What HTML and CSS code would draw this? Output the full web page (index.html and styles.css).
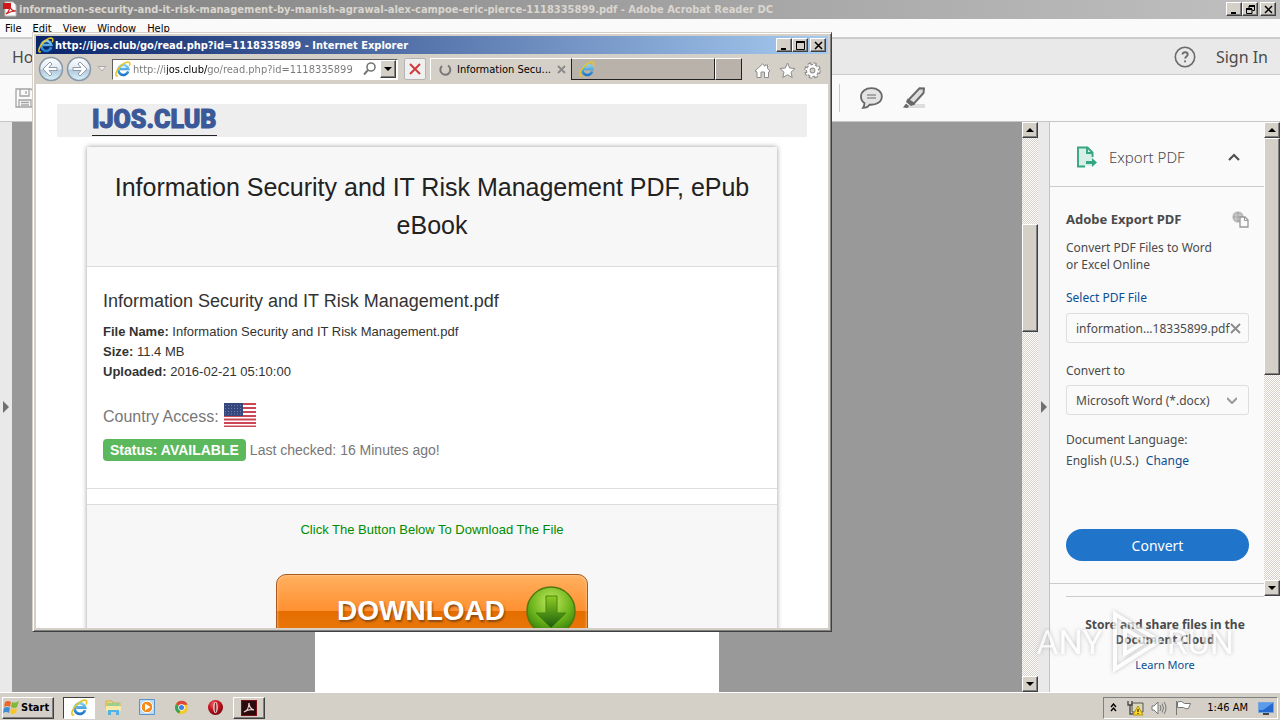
FILE: index.html
```html
<!DOCTYPE html>
<html lang="en">
<head>
  <meta charset="utf-8">
  <title>Desktop</title>
  <link rel="stylesheet" href="styles.css">
</head>
<body class="desktop">
  <svg class="sprites" width="0" height="0">
    <defs>
      <linearGradient id="ieBlue" x1="0" y1="0" x2="0" y2="1">
        <stop offset="0" stop-color="#7fd0f5"/>
        <stop offset="1" stop-color="#1b78c8"/>
      </linearGradient>
      <linearGradient id="navFill" x1="0" y1="0" x2="0" y2="1">
        <stop offset="0" stop-color="#fff"/>
        <stop offset="0.5" stop-color="#dfe8f0"/>
        <stop offset="0.55" stop-color="#b4c8dc"/>
        <stop offset="1" stop-color="#d8f4fc"/>
      </linearGradient>
      <radialGradient id="greenBall" cx="0.5" cy="0.3" r="0.7">
        <stop offset="0" stop-color="#c3e85e"/>
        <stop offset="0.6" stop-color="#6cb51c"/>
        <stop offset="1" stop-color="#357d08"/>
      </radialGradient>
      <linearGradient id="greenArrow" x1="0" y1="0" x2="0" y2="1">
        <stop offset="0" stop-color="#8fcc22"/>
        <stop offset="1" stop-color="#175c0c"/>
      </linearGradient>
      <radialGradient id="operaRed" cx="0.4" cy="0.3" r="0.7">
        <stop offset="0" stop-color="#f26a6a"/>
        <stop offset="0.5" stop-color="#c81420"/>
        <stop offset="1" stop-color="#7c0410"/>
      </radialGradient>
    </defs>
    <symbol id="ie" viewBox="0 0 16 16">
      <path d="M13.2 10.4A5 5 0 1 1 13.3 8H5" fill="none" stroke="url(#ieBlue)" stroke-width="2.6"/>
      <path d="M3 14.6C0 16 .2 12.4 2.6 8.6 5.6 4 11 .4 13.8 1.2c1.400.5 1.300 2.300.4 4" fill="none" stroke="#e8c520" stroke-width="1.5"/>
    </symbol>
  </svg>

  <main class="acrobat">
    <header class="acrobat-title">
      <svg width="16" height="16" viewBox="0 0 16 16"><path d="M3 1h8l3 3v11H3z" fill="#fff" stroke="#bbb"/><path d="M1 2h8v6H1z" fill="#d01818"/><path d="M4 13c4-3 4-6 4-9 0 4 2 6 6 6-4 0-7 1-10 3z" fill="none" stroke="#c22" stroke-width="1.2"/></svg>
      <span class="grow">information-security-and-it-risk-management-by-manish-agrawal-alex-campoe-eric-pierce-1118335899.pdf - Adobe Acrobat Reader DC</span>
      <div class="window-buttons">
        <button aria-label="Minimize"><svg width="9" height="9"><path d="M1 7h5v2H1z"/></svg></button>
        <button aria-label="Restore"><svg width="9" height="9"><path d="M3 3V1h5.500v4.500H6.500M.5 4h5.500v4.500H.5z" fill="none" stroke="#000"/><path d="M3 0h6v2H3zM0 3h6v2H0z"/></svg></button>
        <button class="spaced" aria-label="Close"><svg width="9" height="9"><path d="M1 1l7 7M8 1L1 8" stroke="#000" stroke-width="1.500"/></svg></button>
      </div>
    </header>
    <nav class="menu-bar">
      <button>File</button><button>Edit</button><button>View</button><button>Window</button><button>Help</button>
    </nav>
    <div class="home-bar">
      <button class="home-tab">Home</button>
      <span class="grow"></span>
      <button class="icon-button" aria-label="Help"><svg width="22" height="22" viewBox="0 0 22 22" fill="none" stroke="#6b6b6b" stroke-width="1.600"><circle cx="11" cy="11" r="9.700"/><path d="M8.500 8.600c0-3.200 5.200-3 5.200 0 0 1.900-2.600 1.800-2.600 4M11.100 14.500v1.800" stroke-width="1.900"/></svg></button>
      <button class="sign-in">Sign In</button>
    </div>
    <div class="tool-bar">
      <button class="icon-button" aria-label="Save"><svg width="20" height="20" viewBox="0 0 20 20" fill="none" stroke="#a4a4a4" stroke-width="1.300"><path d="M1 1h15l3 3v15H1zM5 1v7h9V1M4 19v-7h12v7M11 3v3M6 14.500h8M6 17h8"/></svg></button>
      <span class="grow"></span>
      <i class="divider"></i>
      <button class="icon-button" aria-label="Comment"><svg width="24" height="22" viewBox="0 0 24 22"><path d="M12.500 1.200C6.500 1.200 2 4.600 2 9.400c0 3 1.500 5.300 3.500 6.600 0 2-.5 3.500-1.500 4.800 3 0 5.500-1.500 6.500-3.100 7 .6 12.300-3 12.300-8.300 0-4.800-4.500-8.200-10.300-8.200z" fill="#e4e4e4" stroke="#686868" stroke-width="1.800"/><path d="M8 8h9M8 11h9" stroke="#686868"/></svg></button>
      <button class="icon-button" aria-label="Highlight"><svg width="24" height="22" viewBox="0 0 24 22"><path d="M7 17h16v4H5z" fill="#ddd"/><path d="M6.500 13L17.500 1.300 22 1.500l-.5 4.500L12 16.500z" fill="#ddd" stroke="#686868" stroke-width="1.900"/><path d="M5.500 11.500l7.500 6-4 1.500-5-4zM1 20.500l3-4 3 2.500-1.500 2z" fill="#686868"/></svg></button>
    </div>

    <div class="workspace">
      <button class="side-strip" aria-label="Open left pane"><svg width="6" height="12"><path d="M0 0l6 6-6 6z" fill="#707070"/></svg></button>
      <section class="document"><div class="sheet"></div></section>
      <div class="scrollbar">
        <button aria-label="Up"><svg width="8" height="4"><path d="M0 4l4-4 4 4z"/></svg></button>
        <div class="track"><div class="thumb document-thumb"></div></div>
        <button aria-label="Down"><svg width="8" height="4"><path d="M0 0l4 4 4-4z"/></svg></button>
      </div>
      <button class="side-strip side-strip-right" aria-label="Close right pane"><svg width="6" height="12"><path d="M0 0l6 6-6 6z" fill="#707070"/></svg></button>
      <aside class="panel">
        <div class="panel-scroll">
          <div class="panel-body">
            <div class="panel-head">
              <svg width="22" height="22" viewBox="0 0 22 22"><path d="M2 1.500h9.500l5 5V20H2z" fill="#d8efe6"/><path d="M9 20.500H2V1.500h9.500l5 5V11M11 2v5h5.500" fill="none" stroke="#36a583" stroke-width="1.900"/><path d="M10 15h6v-3l5 4.500-5 4.500v-3h-6z" fill="#36a583"/></svg>
              <h2>Export PDF</h2>
              <svg width="12" height="8" fill="none" stroke="#505050" stroke-width="2.200"><path d="M1 7l5-5 5 5"/></svg>
            </div>
            <form class="export-form">
              <div class="export-title">
                <h3>Adobe Export PDF</h3>
                <svg width="17" height="17" viewBox="0 0 17 17"><circle cx="6" cy="6" r="5.500" fill="#aaa"/><path d="M0 4h12M0 8h12M4 0v12M8 0v12" stroke="#ddd" stroke-width=".7"/><path d="M8 6h5l3 3v7H8z" fill="#fafafa" stroke="#999" stroke-width="1.300"/><path d="M12.500 6v3.500H16" fill="none" stroke="#999"/></svg>
              </div>
              <p>Convert PDF Files to Word<br>or Excel Online</p>
              <label class="file-label" for="pdf-file">Select PDF File</label>
              <div class="file-field">
                <input id="pdf-file" type="text" value="information...18335899.pdf" readonly>
                <button type="button" aria-label="Remove"><svg width="11" height="11" stroke="#8a8a8a" stroke-width="1.800"><path d="M1 1l9 9M10 1l-9 9"/></svg></button>
              </div>
              <label class="convert-label" for="format">Convert to</label>
              <div class="select-field">
                <select id="format"><option>Microsoft Word (*.docx)</option></select>
                <svg width="10" height="7" fill="none" stroke="#999" stroke-width="2"><path d="M0 1l5 5 5-5"/></svg>
              </div>
              <p class="language">Document Language:<br>English (U.S.) <a href="#">Change</a></p>
              <button type="button" class="convert">Convert</button>
            </form>
          </div>
          <div class="scrollbar">
            <button aria-label="Up"><svg width="8" height="4"><path d="M0 4l4-4 4 4z"/></svg></button>
            <div class="track"><div class="thumb panel-thumb"></div></div>
            <button aria-label="Down"><svg width="8" height="4"><path d="M0 0l4 4 4-4z"/></svg></button>
          </div>
        </div>
        <footer class="panel-foot">
          <strong>Store and share files in the<br>Document Cloud</strong>
          <a href="#">Learn More</a>
        </footer>
      </aside>
    </div>
  </main>

  <section class="browser">
    <header class="browser-title">
      <svg width="16" height="16"><use href="#ie"/></svg>
      <span class="grow">http://ijos.club/go/read.php?id=1118335899 - Internet Explorer</span>
      <div class="window-buttons">
        <button aria-label="Minimize"><svg width="9" height="9"><path d="M1 7h5v2H1z"/></svg></button>
        <button aria-label="Maximize"><svg width="9" height="9"><path d="M.5 1h8v7.500h-8z" fill="none" stroke="#000"/><path d="M0 0h9v2H0z"/></svg></button>
        <button class="spaced" aria-label="Close"><svg width="9" height="9"><path d="M1 1l7 7M8 1L1 8" stroke="#000" stroke-width="1.500"/></svg></button>
      </div>
    </header>
    <nav class="browser-bar">
      <button class="nav-button" aria-label="Back"><svg width="26" height="26" viewBox="0 0 26 26"><circle cx="13" cy="13" r="11.500" fill="url(#navFill)" stroke="#8797a8" stroke-width="1.500"/><path d="M5 13l7-7 2 2-3 3.500h8v3h-8l3 3.500-2 2z" fill="#fff" stroke="#8d9bab"/></svg></button>
      <button class="nav-button" aria-label="Forward"><svg width="26" height="26" viewBox="0 0 26 26"><circle cx="13" cy="13" r="11.500" fill="url(#navFill)" stroke="#8797a8" stroke-width="1.500"/><path d="M21 13l-7-7-2 2 3 3.500H7v3h8L12 18l2 2z" fill="#fff" stroke="#8d9bab"/></svg></button>
      <button class="history" aria-label="Recent pages"><svg width="10" height="6"><path d="M1 .5h8l-4 4.500z" fill="#eee" stroke="#aaa"/></svg></button>
      <div class="address">
        <svg width="16" height="16"><use href="#ie"/></svg>
        <input type="text" aria-label="Address" value="http://ijos.club/go/read.php?id=1118335899">
        <svg width="16" height="14" fill="none" stroke="#777"><circle cx="9" cy="5" r="4" stroke-width="1.600"/><path d="M6 8l-4 4.500" stroke-width="2"/></svg>
        <button class="address-drop" aria-label="Show list"><svg width="8" height="4"><path d="M0 0l4 4 4-4z"/></svg></button>
      </div>
      <button class="stop" aria-label="Stop"><svg width="12" height="12" stroke="#d13b3b" stroke-width="2"><path d="M1 1l10 10M11 1L1 11"/></svg></button>
      <div class="tab tab-active">
        <svg width="14" height="14" fill="none" stroke="#777" stroke-width="2"><path d="M10 2.500A5 5 0 1 1 4 3"/></svg>
        <span class="grow">Information Secu...</span>
        <button aria-label="Close tab"><svg width="9" height="9" stroke="#8a8a8a" stroke-width="1.800"><path d="M1 1l7 7M8 1L1 8"/></svg></button>
      </div>
      <div class="tab tab-idle"><svg width="16" height="16"><use href="#ie"/></svg></div>
      <button class="tab-new" aria-label="New tab"></button>
      <div class="browser-tools">
        <button aria-label="Home"><svg width="17" height="17" viewBox="0 0 17 17"><path d="M1 9l7.500-7L11 4.300V3h2.500v3.500L16 9l-1.500 1v5.500h-4V10h-3.500v5.500H3V10z" fill="#fff" stroke="#8b8b8b"/></svg></button>
        <button aria-label="Favorites"><svg width="17" height="17" viewBox="0 0 17 17"><path d="M8.500 1l2.200 5 5.300.5-4 3.700 1.200 5.300-4.700-2.800-4.700 2.800L5 10.200 1 6.500 6.300 6z" fill="#fff" stroke="#8b8b8b"/></svg></button>
        <button aria-label="Tools"><svg width="17" height="17" viewBox="0 0 17 17"><circle cx="8.500" cy="8.500" r="6.300" fill="none" stroke="#8b8b8b" stroke-width="4" stroke-dasharray="3 1.948"/><circle cx="8.500" cy="8.500" r="4.300" fill="none" stroke="#8b8b8b" stroke-width="4.600"/><circle cx="8.500" cy="8.500" r="6.200" fill="none" stroke="#fff" stroke-width="2" stroke-dasharray="2 2.870"/><circle cx="8.500" cy="8.500" r="4.200" fill="none" stroke="#fff" stroke-width="2.600"/></svg></button>
      </div>
    </nav>

    <div class="page">
      <div class="site-header"><a href="#">IJOS.CLUB</a></div>
      <article class="card">
        <h1>Information Security and IT Risk Management PDF, ePub eBook</h1>
        <div class="details">
          <h4>Information Security and IT Risk Management.pdf</h4>
          <p><b>File Name:</b> Information Security and IT Risk Management.pdf<br>
          <b>Size:</b> 11.4 MB<br>
          <b>Uploaded:</b> 2016-02-21 05:10:00</p>
          <div class="country">
            <span>Country Access:</span>
            <svg width="32" height="24" viewBox="0 0 32 24">
              <path d="M0 0h32v24H0z" fill="#fff"/>
              <path d="M0 1h32M0 5h32M0 9h32M0 13h32M0 16.500h32M0 20h32M0 23.500h32" stroke="#cc4756" stroke-width="1.900"/>
              <path d="M0 0h19v13H0z" fill="#35477d"/>
              <path d="M1 2.500h17M1 5.500h17M1 8.500h17M1 11h17" stroke="#7180ab" stroke-dasharray="1 2"/>
            </svg>
          </div>
          <div class="status"><span class="badge">Status: AVAILABLE</span> Last checked: 16 Minutes ago!</div>
        </div>
        <div class="download-area">
          <p>Click The Button Below To Download The File</p>
          <button class="download">
            <span>DOWNLOAD</span>
            <svg width="50" height="50" viewBox="0 0 50 50"><circle cx="25" cy="25" r="24" fill="url(#greenBall)" stroke="#54780f" stroke-width="1.500"/><path d="M20 10h11v17h9L25 42 10 27h10z" fill="url(#greenArrow)" stroke="#47850f"/></svg>
          </button>
        </div>
      </article>
    </div>
  </section>

  <div class="watermark">
    <span>ANY</span>
    <svg width="56" height="64" viewBox="0 0 56 64" fill="none" stroke="#fff" stroke-width="4"><path d="M8 4l44 27L8 59z"/><path d="M18 19v25l20-13z"/></svg>
    <span>RUN</span>
  </div>

  <footer class="taskbar">
    <button class="start"><svg width="17" height="17" viewBox="0 0 17 17"><path d="M2 3q3-2 6 0L7 8Q4 6 1 8z" fill="#ee6425"/><path d="M9 3q3 2 7-1l-2 6q-3 2-6 0z" fill="#80b93a"/><path d="M1 9q3-2 6 0l-1 5q-3-2-6 0z" fill="#3f8bd5"/><path d="M8 9q3 2 6 0l-1 5q-3 2-6 0z" fill="#f9c52c"/></svg>Start</button>
    <button class="task task-current" aria-label="Internet Explorer"><svg width="17" height="17"><use href="#ie"/></svg></button>
    <button class="task" aria-label="Explorer"><svg width="17" height="17" viewBox="0 0 17 17"><path d="M1 2h6l1 2h7v5H1z" fill="#f3d577" stroke="#d5b04a"/><path d="M2 4h12v3H2z" fill="#9bd08c"/><path d="M1 7h15v5H1z" fill="#f9e9a8"/><path d="M3 16v-5h11v5h-3v-3H6v3z" fill="#52b3e5"/></svg></button>
    <button class="task" aria-label="Media Player"><svg width="17" height="17" viewBox="0 0 17 17"><path d="M.5.5h15v15H.5z" fill="#bfdcf5" stroke="#5a93c8"/><circle cx="8" cy="8" r="5.800" fill="#f68b1b" stroke="#fff"/><path d="M6 4.500v7L11.500 8z" fill="#fff"/></svg></button>
    <button class="task" aria-label="Chrome"><svg width="15" height="15" viewBox="0 0 16 16"><circle cx="8" cy="8" r="7" fill="#f5c928"/><path d="M8 8L2 4.500A7 7 0 0 1 14.500 5H8z" fill="#dd4638"/><path d="M8 8l-2.500 6.500A7 7 0 0 1 2 4.500z" fill="#35a355"/><circle cx="8" cy="8" r="3.500" fill="#fff"/><circle cx="8" cy="8" r="2.700" fill="#3f7fe8"/></svg></button>
    <button class="task" aria-label="Opera"><svg width="17" height="17" viewBox="0 0 17 17"><circle cx="8.500" cy="8.500" r="7.500" fill="url(#operaRed)"/><ellipse cx="8.500" cy="8.500" rx="2.200" ry="5.800" fill="#f4eaea"/><ellipse cx="8.500" cy="8.500" rx="1" ry="5" fill="#a0202a"/></svg></button>
    <button class="task task-open" aria-label="Acrobat Reader"><svg width="16" height="16" viewBox="0 0 16 16"><path d="M0 0h16v16H0z" fill="#7c1014"/><path d="M1 1h14v14H1z" fill="#2b0b0b"/><path d="M3 12c3-1 5-5 5-9 0 4 2 6 5 7-4-1-7 0-10 2z" fill="none" stroke="#e8d8d8" stroke-width="1.200"/></svg></button>
    <span class="grow"></span>
    <div class="tray">
      <svg width="7" height="9" fill="none" stroke="#000" stroke-width="1.400"><path d="M1 4l2.500-3L6 4M1 8l2.500-3L6 8"/></svg>
      <svg width="17" height="16" viewBox="0 0 17 16"><path d="M5 3h11v9H5z" fill="#d8d8b8" stroke="#555"/><path d="M1 1v4h4V1M3 5v9h4" fill="none" stroke="#444" stroke-width="1.300"/><path d="M11 6l5 9H6z" fill="#ffd91f" stroke="#b69418"/><path d="M11 9v3M11 13v1" stroke="#000"/></svg>
      <svg width="17" height="14" viewBox="0 0 17 14" fill="none" stroke="#777"><path d="M1 5h2l4-4v12L3 9H1z" fill="#fff"/><path d="M9 4q2 3 0 6M11 2.500q3 4.500 0 9M13 1q4 6 0 12"/></svg>
      <svg width="17" height="16" viewBox="0 0 17 16" fill="#fff" stroke="#777"><path d="M1.500 1v14M2.500 2q4-2 7 1.500h6l-2 5q-3 1-5-1H2.500z"/></svg>
      <time>1:46 AM</time>
      <svg width="16" height="14" viewBox="0 0 16 14"><path d="M.5 1.500h15v10H.5z" fill="#2268cf" stroke="#72a5df"/><path d="M1 2h14L5 9H1z" fill="#5c9be9"/><path d="M5 12h6v2H5z" fill="#444"/></svg>
    </div>
  </footer>
</body>
</html>
```

FILE: styles.css
```css
* {
  box-sizing: border-box;
}

body, h1, h2, h3, h4, p {
  margin: 0;
}

button, input, select {
  font: inherit;
  color: inherit;
  padding: 0;
  border: 0;
  background: none;
}

svg {
  display: block;
  flex: none;
}

a {
  color: #0b4f94;
  text-decoration: none;
}

.grow {
  flex: 1;
}

.sprites {
  position: absolute;
}

.desktop {
  height: 100vh;
  display: flex;
  flex-direction: column;
  overflow: hidden;
  font-family: Tahoma, "DejaVu Sans Condensed", sans-serif;
  font-size: 11px;
  color: #000;
}

/* Acrobat */
.acrobat {
  flex: 1;
  min-height: 0;
  display: flex;
  flex-direction: column;
}

.acrobat-title {
  height: 19px;
  padding: 0 4px 1px 2px;
  display: flex;
  align-items: center;
  gap: 1px;
  background: linear-gradient(to right, #808080, #c0c0c0);
  color: #dad6cf;
  font-weight: bold;
  white-space: nowrap;
}

.window-buttons {
  display: flex;
}

.window-buttons button {
  width: 16px;
  height: 14px;
  display: flex;
  align-items: center;
  justify-content: center;
}

.window-buttons button, .scrollbar button, .thumb, .address-drop {
  background: #d4d0c8;
  border: 1px solid;
  border-color: #fff #404040 #404040 #fff;
  box-shadow: inset -1px -1px #808080;
}

.window-buttons .spaced {
  margin-left: 2px;
}

.menu-bar {
  height: 18px;
  padding-left: 5px;
  display: flex;
  align-items: center;
  gap: 11px;
  background: #fafafa;
}

.home-bar {
  height: 38px;
  padding: 0 12px;
  display: flex;
  align-items: center;
  background: #e9e9e9;
  border-top: 2px solid #ccc;
  border-bottom: 1px solid #ccc;
  font-family: "Noto Sans", sans-serif;
  font-size: 16px;
  color: #4b4b4b;
}

.sign-in {
  margin-left: 20px;
}

.tool-bar {
  height: 47px;
  padding: 0 354px 0 15px;
  display: flex;
  align-items: center;
  gap: 19px;
  background: #fafafa;
  border-bottom: 1px solid #c6c6c6;
}

.divider {
  width: 1px;
  height: 28px;
  background: #ccc;
}

.workspace {
  flex: 1;
  min-height: 0;
  display: flex;
}

.side-strip {
  width: 12px;
  padding-left: 3px;
  background: #e9e9e9;
}

.side-strip-right {
  border-right: 1px solid #c4c4c4;
}

.document {
  flex: 1;
  padding-top: 40px;
  background: #999;
}

.sheet {
  width: 404px;
  height: 100%;
  margin: 0 auto;
  background: #fff;
}

.scrollbar {
  flex: none;
  width: 16px;
  display: flex;
  flex-direction: column;
}

.scrollbar button {
  height: 16px;
  display: flex;
  align-items: center;
  justify-content: center;
}

.track {
  flex: 1;
  display: flow-root;
  background: repeating-conic-gradient(#d4d0c8 0 25%, #fff 0 50%) 0 0 / 2px 2px;
}

.document-thumb {
  height: 108px;
  margin-top: 86px;
}

.panel-thumb {
  height: 237px;
}

/* export panel */
.panel {
  flex: none;
  width: 230px;
  background: #fafafa;
  font-family: "Noto Sans", sans-serif;
  font-size: 12px;
  line-height: 17px;
  color: #4a4a4a;
}

.panel-scroll {
  height: 474px;
  display: flex;
}

.panel-body {
  flex: 1;
  min-width: 0;
}

.panel-head {
  height: 65px;
  padding: 6px 24px 0 26px;
  display: flex;
  align-items: center;
  gap: 11px;
  border-bottom: 1px solid #ccc;
}

.panel-head h2 {
  flex: 1;
  font-size: 15px;
  font-weight: 300;
}

.export-form {
  height: 397px;
  padding: 23px 15px 0 16px;
  border-bottom: 1px solid #ccc;
}

.export-title {
  height: 19px;
  margin-bottom: 10px;
  display: flex;
  justify-content: space-between;
  align-items: center;
}

.export-title h3 {
  font-size: 13px;
}

.export-form label {
  display: block;
}

.file-label {
  margin: 16px 0 7px;
  color: #0b4f94;
}

.file-field, .select-field {
  height: 30px;
  padding: 0 7px 0 9px;
  display: flex;
  align-items: center;
  border: 1px solid #dedede;
  border-radius: 3px;
}

.file-field input {
  flex: 1;
  min-width: 0;
}

.convert-label {
  margin: 19px 0 6px;
}

.select-field select {
  flex: 1;
  min-width: 0;
  appearance: none;
}

.select-field {
  padding-right: 11px;
}

.language {
  margin: 14px 0 58px;
  line-height: 21px;
}

.language a {
  margin-left: 4px;
}

.convert {
  width: 100%;
  height: 32px;
  border-radius: 16px;
  background: #2074ca;
  color: #fff;
  font-size: 14px;
}

.panel-foot {
  margin: 0 16px;
  padding-top: 20px;
  border-top: 1px solid #ccc;
  display: flex;
  flex-direction: column;
  align-items: center;
  gap: 10px;
  font-size: 11px;
  line-height: 15px;
  text-align: center;
  white-space: nowrap;
}

.panel-foot strong {
  font-size: 12px;
}

/* Internet Explorer */
.browser {
  position: absolute;
  left: 32px;
  top: 32px;
  width: 800px;
  height: 600px;
  display: flex;
  flex-direction: column;
  background: #d4d0c8;
  border: 1px solid;
  border-color: #d4d0c8 #404040 #404040 #d4d0c8;
  box-shadow: inset 1px 1px #fff, inset -1px -1px #808080;
  padding: 3px;
}

.browser-title {
  height: 18px;
  padding: 0 2px;
  display: flex;
  align-items: center;
  gap: 1px;
  background: linear-gradient(to right, #0a246a, #a6caf0);
  color: #fff;
  font-weight: bold;
}

.browser-bar {
  height: 30px;
  padding: 0 7px 0 2px;
  display: flex;
  align-items: center;
}

.nav-button {
  width: 28px;
}

.history {
  width: 18px;
  padding-left: 3px;
}

.address {
  width: 286px;
  height: 21px;
  display: flex;
  align-items: center;
  gap: 2px;
  padding: 0 1px 0 2px;
  background: #fff;
  border: 1px solid;
  border-color: #606060 #fff #fff #606060;
}

/* the domain part is darker than the rest of the URL */
.address input {
  flex: 1;
  min-width: 0;
  color: transparent;
  background: linear-gradient(to right, #777 34px, #000 34px 75px, #777 75px);
  background-clip: text;
}

.address-drop {
  width: 16px;
  height: 18px;
  display: flex;
  align-items: center;
  justify-content: center;
}

.stop {
  width: 22px;
  height: 22px;
  margin: 0 4px 0 6px;
  display: flex;
  align-items: center;
  justify-content: center;
  background: #f0f0f0;
  border: 1px solid #b5b5b5;
  border-radius: 2px;
}

.tab {
  height: 22px;
  display: flex;
  align-items: center;
  gap: 5px;
  padding: 0 5px 0 7px;
  border-top: 1px solid #fff;
  border-left: 1px solid #fff;
}

.tab-active {
  width: 141px;
}

.tab-idle, .tab-new {
  height: 22px;
  background: #b9b2aa;
  border: 1px solid #fff;
  border-right: 1px solid #222;
  border-bottom: 1px solid #222;
}

.tab-idle {
  width: 144px;
  border-left: 1px solid #222;
}

.tab-new {
  width: 27px;
}

.browser-tools {
  margin-left: auto;
  padding-top: 3px;
  display: flex;
  gap: 8px;
}

/* opened page */
.page {
  flex: 1;
  min-height: 0;
  overflow: hidden;
  padding: 20px 21px 0;
  background: #fff;
  font-family: Arial, "Liberation Sans", sans-serif;
  font-size: 13px;
  line-height: 20px;
  color: #333;
}

.site-header {
  height: 33px;
  padding-left: 35px;
  background: #eee;
}

.site-header a {
  display: inline-block;
  border-bottom: 1px solid #222;
  color: #3b5998;
  font-family: Impact, Roboto, sans-serif;
  font-size: 25px;
  font-weight: 900;
  line-height: 31px;
  -webkit-text-stroke: 1px #3b5998;
}

.card {
  margin: 10px 30px 0;
  background: #fff;
  box-shadow: 0 0 5px rgba(0, 0, 0, 0.4);
}

.card h1 {
  padding: 21px 20px 22px;
  background: #f7f7f7;
  border-bottom: 1px solid #ddd;
  color: #222;
  font-size: 25px;
  font-weight: normal;
  line-height: 38px;
  text-align: center;
}

.details {
  padding: 24px 16px 27px;
  border-bottom: 1px solid #ddd;
}

.details h4 {
  margin-bottom: 11px;
  font-size: 18px;
  font-weight: normal;
}

.country {
  margin: 21px 0 12px;
  display: flex;
  align-items: flex-end;
  gap: 5px;
  color: #777;
  font-size: 16px;
}

.status {
  display: flex;
  align-items: center;
  gap: 4px;
  color: #777;
  font-size: 14px;
}

.badge {
  padding: 0 7px;
  border-radius: 4px;
  background: #5cb85c;
  color: #fff;
  font-weight: bold;
  line-height: 22px;
}

.download-area {
  margin-top: 15px;
  padding: 15px 0 20px;
  background: #f7f7f7;
  border-top: 1px solid #ddd;
  text-align: center;
}

.download-area p {
  margin-bottom: 34px;
  color: #008c00;
}

.download {
  width: 312px;
  height: 74px;
  margin: 0 auto;
  padding: 0 11px 0 60px;
  display: flex;
  align-items: center;
  justify-content: space-between;
  border: 1px solid #a85a22;
  border-radius: 10px;
  background: linear-gradient(#ffb060, #ff9030 50%, #e46c00 50%, #f08010);
  box-shadow: inset 0 0 3px #ffd9a8;
  color: #fff;
  font-size: 28px;
  font-weight: bold;
  text-shadow: 1px 2px 2px #8a4a10;
}

/* watermark over everything */
.watermark {
  position: absolute;
  right: 46px;
  bottom: 46px;
  display: flex;
  align-items: center;
  gap: 4px;
  color: #fff;
  font-family: Roboto, sans-serif;
  font-size: 34px;
  opacity: 0.7;
  filter: drop-shadow(0 0 2px #aaa);
  pointer-events: none;
}

/* taskbar */
.taskbar {
  height: 28px;
  padding: 3px 2px 1px;
  display: flex;
  align-items: center;
  background: #d4d0c8;
  border-top: 1px solid #fff;
}

.start {
  width: 52px;
  height: 22px;
  margin-right: 9px;
  display: flex;
  align-items: center;
  gap: 1px;
  font-weight: bold;
}

.start, .task-open {
  border: 1px solid;
  border-color: #fff #404040 #404040 #fff;
  box-shadow: inset -1px -1px #808080;
}

.task {
  width: 32px;
  height: 22px;
  margin-right: 2px;
  display: flex;
  align-items: center;
  justify-content: center;
}

.task-current {
  background: #fff;
  border: 1px solid;
  border-color: #404040 #fff #fff #404040;
}

.tray {
  height: 22px;
  padding: 0 3px 0 6px;
  display: flex;
  align-items: center;
  gap: 7px;
  border: 1px solid;
  border-color: #808080 #fff #fff #808080;
}

.tray svg:first-child {
  margin-right: 3px;
}

.tray time {
  margin: 0 3px 0 8px;
}
```
